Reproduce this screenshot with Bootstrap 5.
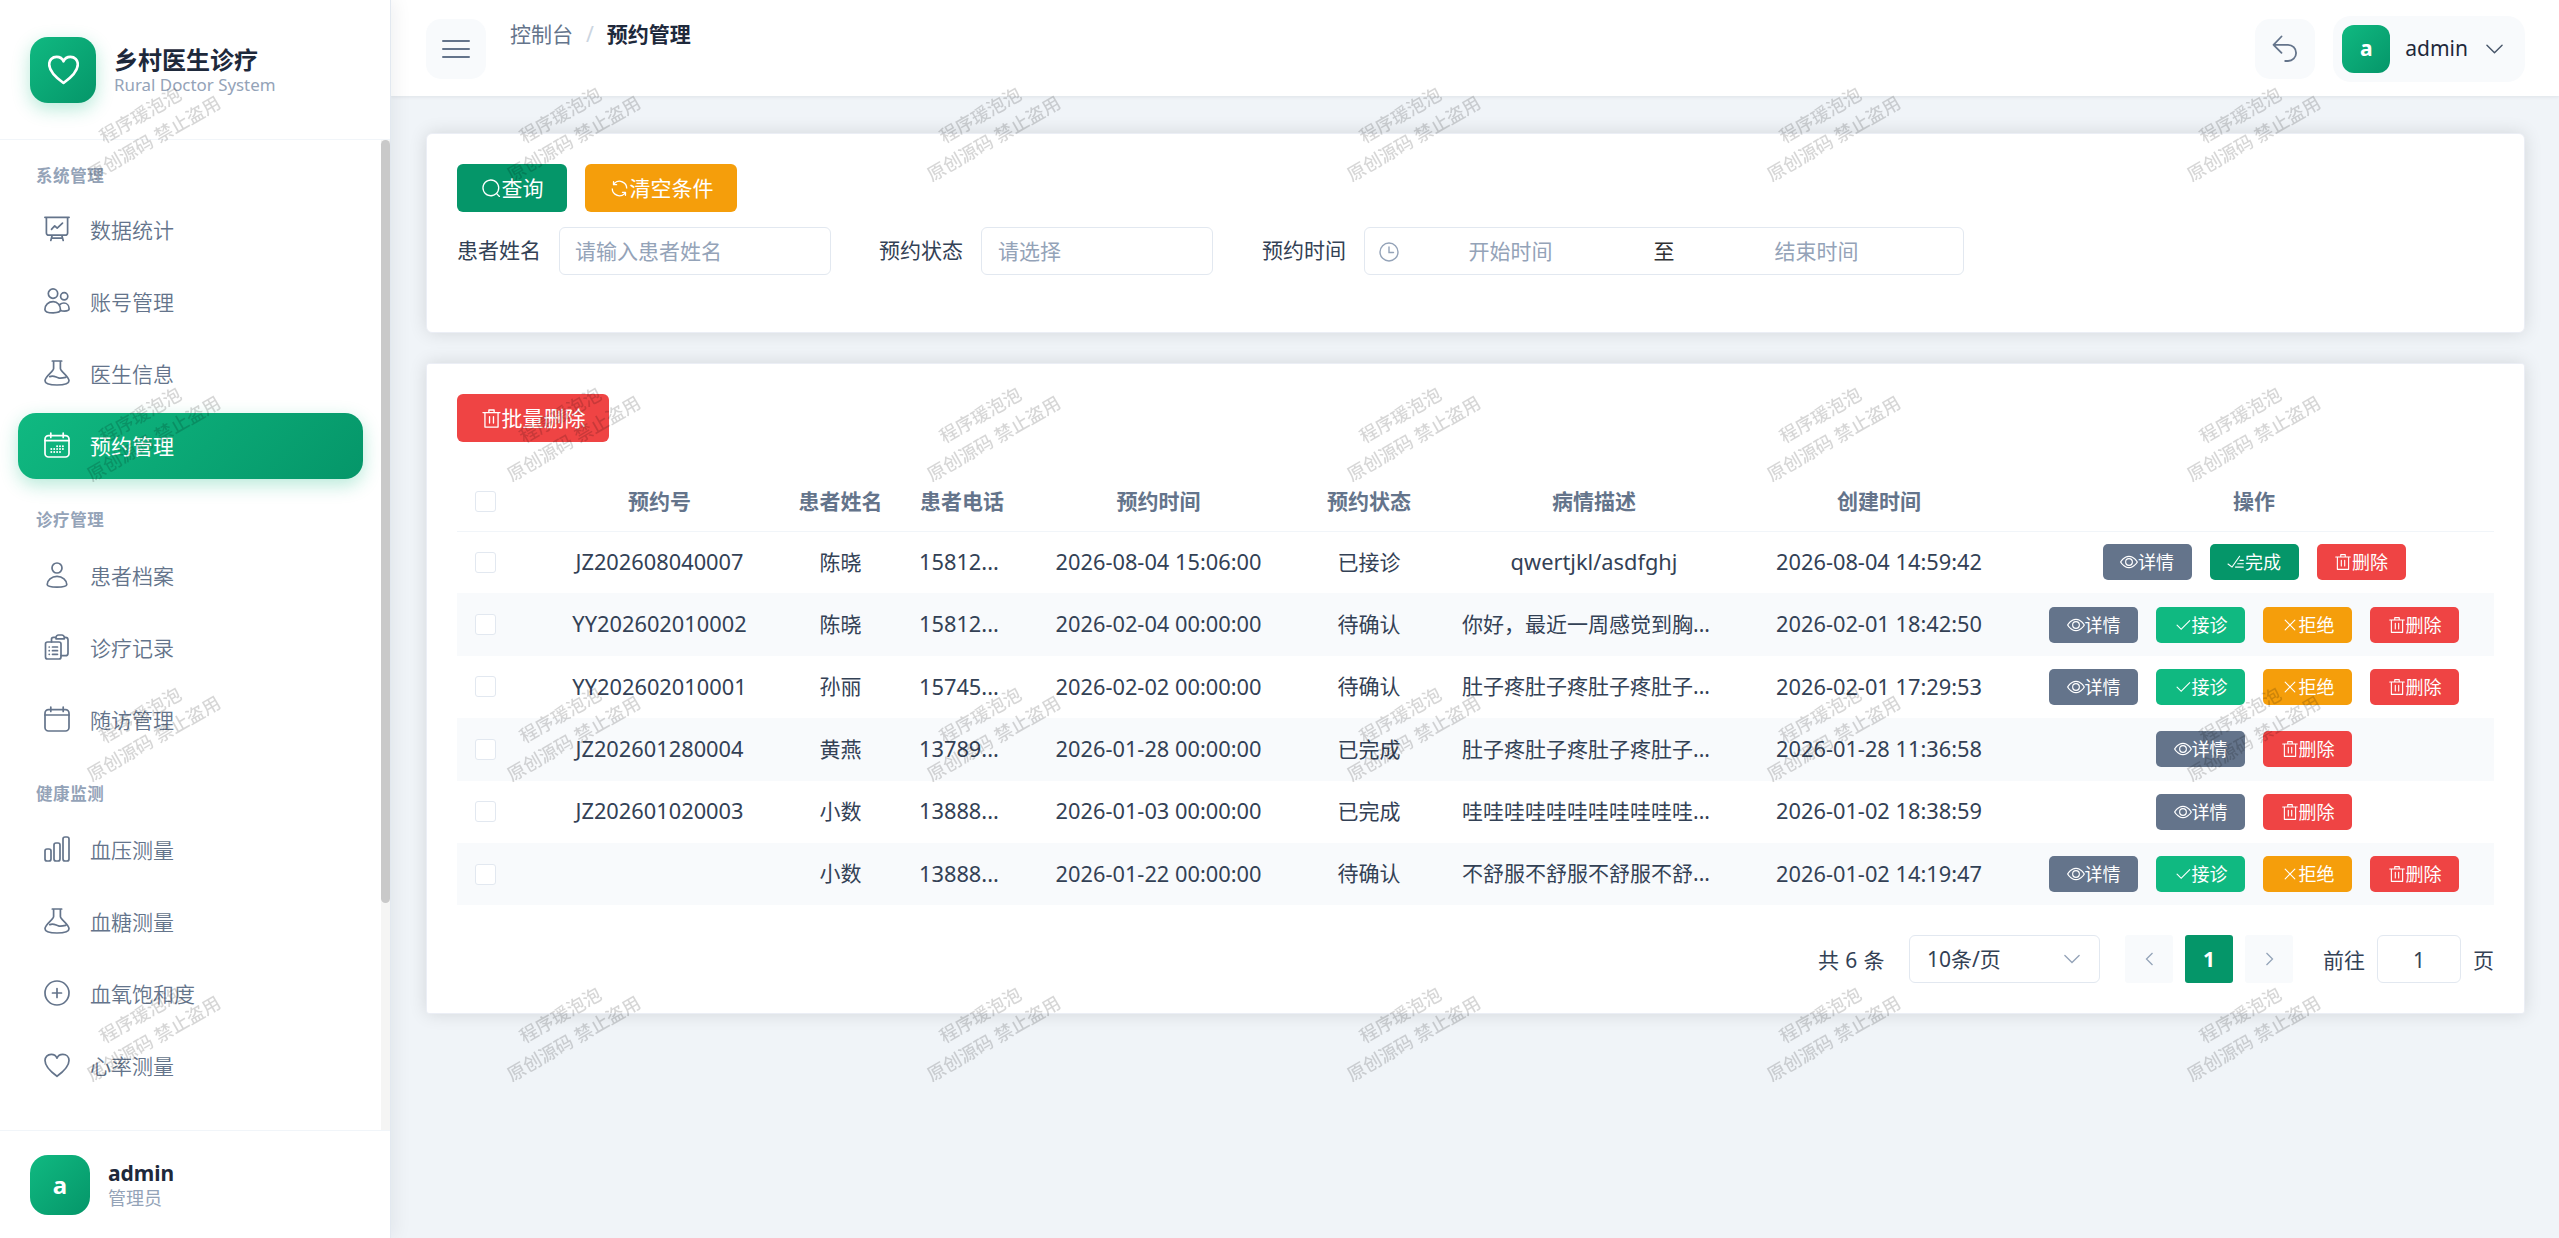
<!DOCTYPE html>
<html lang="zh-CN">
<head>
<meta charset="utf-8">
<meta name="viewport" content="width=device-width, initial-scale=1">
<title>乡村医生诊疗 - 预约管理</title>
<link href="https://cdn.jsdelivr.net/npm/bootstrap@5.3.0/dist/css/bootstrap.min.css" rel="stylesheet">
<style>
:root{--c-green:#059669;--c-mint:#10b981;--c-slate:#64748b;--c-line:#e2e8f0}
html,body{height:100%}
body{font-family:"Noto Sans","Noto Sans CJK SC",sans-serif;font-size:21px;line-height:1.5;color:#334155;background:#f0f4f8;overflow:hidden}
svg{display:block;flex:none}
.stroke-icon{width:26px;height:26px;fill:none;stroke:currentColor;stroke-width:1.7;stroke-linecap:round;stroke-linejoin:round}
.fill-icon{width:1em;height:1em;fill:currentColor}
.grad{background:linear-gradient(135deg,#10b981,#059669);color:#fff}
/* sidebar */
.side{width:391px;flex:none;background:#fff;box-shadow:3px 0 18px rgba(15,23,42,.07);border-right:1px solid var(--c-line);z-index:3}
.brand{height:140px;padding-left:30px;gap:18px;border-bottom:1px solid #f1f5f9}
.brand-logo{width:66px;height:66px;border-radius:18px;box-shadow:0 6px 18px rgba(16,185,129,.3)}
.brand-heart{width:31px;height:31px;stroke-width:2.2}
.brand-title{font-size:24px;line-height:26px;font-weight:700;color:#1e293b;margin-top:4px}
.brand-sub{font-size:16.9px;line-height:24px;color:#94a3b8}
.menu{padding:3px 0 0 0;min-height:0;overflow:hidden}
.menu-list{width:381px;padding:0 18px}
.menu-cap{height:58px;padding:12px 0 0 18px;font-size:16.5px;font-weight:700;letter-spacing:.6px;color:#94a3b8}
.menu-cap:first-child{height:54px}
.menu-item{width:345px;height:66px;margin-bottom:6px;padding:1px 0 0 26px;gap:20px;border-radius:18px;color:var(--c-slate);text-decoration:none;font-weight:350}
.menu-item .stroke-icon{margin-top:-4px}
.menu-item.active{color:#fff;font-weight:400;box-shadow:0 6px 18px rgba(16,185,129,.3)}
.track{width:9px;background:#f5f5f4;margin-top:-3px}
.thumb{width:9px;height:763px;border-radius:5px;background:#c9c9c9}
.side-user{height:108px;padding-left:30px;gap:18px;border-top:1px solid #f1f5f9}
.user-name{line-height:26px;padding-top:1px;color:#1e293b}
.user-role{font-size:18px;line-height:24px;color:#94a3b8}
.ava-lg{width:60px;height:60px;border-radius:18px;font-size:24px;font-weight:700}
/* top bar */
.topbar{height:96px;flex:none;padding:0 34px 0 35px;background:#fff;box-shadow:0 1px 4px rgba(15,23,42,.08);z-index:2}
.sq-btn{width:60px;height:60px;margin-top:2px;border-radius:15px;background:#f8fafc;color:var(--c-slate)}
.crumb{margin-left:24px;height:96px;padding-top:18px;gap:13px;line-height:32px;color:var(--c-slate)}
.crumb b{color:#1e293b}
.user-pill{height:66px;padding:0 22px 0 9px;margin:2px 0 0 18px;border-radius:18px;background:#f8fafc;color:#1e293b}
.ava-sm{width:48px;height:48px;border-radius:12px;font-size:21px;font-weight:700}
/* panels */
.work{padding:37px 34px 0 35px}
.panel{background:#fff;border:1px solid #ebeef5;border-radius:6px;box-shadow:0 0 18px rgba(0,0,0,.12);padding:30px}
.panel-a{height:200px;margin-bottom:30px}
.panel-b{height:651px;border-radius:3px}
.ui-btn{height:48px;border-radius:6px;border:0;color:#fff;font-size:21px;padding:0 23.5px;line-height:1}
.ui-btn .fill-icon{width:21px;height:21px}
.bg-g{background:#059669}.bg-m{background:#10b981}.bg-o{background:#f59e0b}.bg-r{background:#ef4444}.bg-s{background:#64748b}
.box{height:48px;padding-top:2px;border:1.5px solid var(--c-line);border-radius:6px;background:#fff;color:#94a3b8}
.lab{width:84px;margin-right:18px;flex:none;color:#334155}
/* table */
.grid-table{width:2037px;table-layout:fixed;border-collapse:collapse;margin-top:31px;text-align:center}
.grid-table th{height:58px;font-weight:700;color:var(--c-slate);border-bottom:1px solid #f1f5f9;padding:0}
.grid-table td{height:62.4px;padding:0;white-space:nowrap}
.grid-table tbody tr:nth-child(even){background:#f8fafc}
.num{font-size:21.8px}
.tick{width:21px;height:21px;border:1.5px solid var(--c-line);border-radius:3px;background:#fff;margin-left:18px}
.grid-table .ph,.grid-table .desc{text-align:left;padding-left:18px}
.ops{gap:18px}
.op{width:89px;height:36px;border:0;border-radius:5px;color:#fff;font-size:18px;line-height:1;padding:0}
.op .fill-icon{width:18px;height:18px}
/* pager */
.pager{margin-top:30px;height:48px}
.pager > span{padding-top:2px}
.pg{width:48px;height:48px;border-radius:3px;background:#f8fafc;color:#94a3b8;margin-right:12px}
.pg.on{background:#059669;color:#fff;font-weight:700}
/* watermark layer */
.wm{position:fixed;left:-63px;top:-23px;width:2700px;display:grid;grid-template-columns:repeat(6,420px);grid-auto-rows:300px;pointer-events:none;z-index:20}
.wm div{display:flex;align-items:center;justify-content:center}
.wm span{transform:rotate(-30deg);font-size:18.2px;font-weight:500;line-height:27px;text-align:center;color:rgba(0,0,0,.16);white-space:nowrap}
</style>
<script src="https://cdn.jsdelivr.net/npm/bootstrap@5.3.0/dist/js/bootstrap.bundle.min.js"></script>
</head>
<body>
<svg width="0" height="0" class="position-absolute">
<symbol id="i-search" viewBox="0 0 1024 1024"><path d="m795.904 750.72 124.992 124.928a32 32 0 0 1-45.248 45.248L750.656 795.904a416 416 0 1 1 45.248-45.248zM480 832a352 352 0 1 0 0-704 352 352 0 0 0 0 704z"/></symbol>
<symbol id="i-refresh" viewBox="0 0 1024 1024"><path d="M771.776 794.88A384 384 0 0 1 128 512h64a320 320 0 0 0 555.712 216.448H654.72a32 32 0 1 1 0-64h149.056a32 32 0 0 1 32 32v148.928a32 32 0 1 1-64 0v-50.56zM276.288 295.616h92.992a32 32 0 0 1 0 64H220.16a32 32 0 0 1-32-32V178.56a32 32 0 0 1 64 0v50.56A384 384 0 0 1 896.128 512h-64a320 320 0 0 0-555.776-216.384z"/></symbol>
<symbol id="i-del" viewBox="0 0 1024 1024"><path d="M160 256H96a32 32 0 0 1 0-64h256V95.936a32 32 0 0 1 32-32h256a32 32 0 0 1 32 32V192h256a32 32 0 1 1 0 64h-64v672a32 32 0 0 1-32 32H192a32 32 0 0 1-32-32zm448-64v-64H416v64zM224 896h576V256H224zm192-128a32 32 0 0 1-32-32V416a32 32 0 0 1 64 0v320a32 32 0 0 1-32 32m192 0a32 32 0 0 1-32-32V416a32 32 0 0 1 64 0v320a32 32 0 0 1-32 32"/></symbol>
<symbol id="i-view" viewBox="0 0 1024 1024"><path d="M512 160c320 0 512 352 512 352S832 864 512 864 0 512 0 512s192-352 512-352m0 64c-225.28 0-384.128 208.064-436.8 288 52.608 79.872 211.456 288 436.8 288 225.28 0 384.128-208.064 436.8-288-52.608-79.872-211.456-288-436.8-288m0 64a224 224 0 1 1 0 448 224 224 0 0 1 0-448m0 64a160.192 160.192 0 0 0-160 160c0 88.192 71.744 160 160 160s160-71.808 160-160-71.744-160-160-160"/></symbol>
<symbol id="i-check" viewBox="0 0 1024 1024"><path d="M406.656 706.944 195.84 496.256a32 32 0 1 0-45.248 45.248l256 256 512-512a32 32 0 0 0-45.248-45.248L406.592 706.944z"/></symbol>
<symbol id="i-close" viewBox="0 0 1024 1024"><path d="M764.288 214.592 512 466.88 259.712 214.592a31.936 31.936 0 0 0-45.12 45.12L466.752 512 214.528 764.224a31.936 31.936 0 1 0 45.12 45.184L512 557.184l252.288 252.288a31.936 31.936 0 0 0 45.12-45.12L557.12 512.064l252.288-252.352a31.936 31.936 0 1 0-45.12-45.184z"/></symbol>
<symbol id="i-done" viewBox="0 0 1024 1024"><path d="M280.768 753.728 691.456 167.04a32 32 0 1 1 52.416 36.672L314.24 817.472a32 32 0 0 1-45.44 7.296l-230.4-172.8a32 32 0 0 1 38.4-51.2l203.968 152.96zM736 448a32 32 0 1 1 0-64h192a32 32 0 1 1 0 64zM608 640a32 32 0 0 1 0-64h319.936a32 32 0 1 1 0 64zM480 832a32 32 0 1 1 0-64h447.936a32 32 0 1 1 0 64z"/></symbol>
<symbol id="s-board" viewBox="0 0 26 26"><path d="M.9 1.3h24.2M2.4 1.3v15.6a2.3 2.3 0 0 0 2.3 2.3h16.6a2.3 2.3 0 0 0 2.3-2.3V1.300M8.200 19.300 6.800 24.500M17.800 19.300l1.400 5.200M7.500 22.200h11M7.500 13.400l3.200-3.600 2.500 2.400 5.300-5"/></symbol>
<symbol id="s-users" viewBox="0 0 26 26"><circle cx="9" cy="5.600" r="4.700"/><path d="M9.200 13.600c-4.800 0-8.300 3.400-8.300 7.800 0 1.900 3 3.400 8.300 3.400 4.800 0 7.300-1 7.300-3 0-4.600-3-8.200-7.300-8.200z"/><circle cx="20.200" cy="8.300" r="3.600"/><path d="M15.900 16.500c1.100-1 2.500-1.500 4-1.500 3 0 5.200 2.600 5.200 5.800 0 1.500-2 2.300-4.600 2.300-1.600 0-3-.2-4-.7"/></symbol>
<symbol id="s-flask" viewBox="0 0 26 26"><path d="M8.300 1h9.400M9.600 1v7.500c0 3-8.600 7.600-8.600 12.300C1 23.800 5 25 13 25s12-1.200 12-4.200c0-4.700-8.600-9.300-8.600-12.300V1M5.800 16.600c3.800-1.600 6 .7 8.600 1.300 2.200.5 4.200.2 7.200-.5"/></symbol>
<symbol id="s-cal" viewBox="0 0 26 26"><rect x="1" y="3.600" width="24" height="21.400" rx="3.500"/><path d="M6.800 1v4.500M19.200 1v4.500M1 9h24"/></symbol>
<symbol id="s-caldots" viewBox="0 0 26 26"><rect x="1" y="3.600" width="24" height="21.400" rx="3.500"/><path d="M6.800 1v4.500M19.200 1v4.500M1 8.600h24"/><path stroke-dasharray="0 2.900" stroke-width="2" d="M13.100 14.200h7M7.300 17.100h12.800M7.300 20h10"/></symbol>
<symbol id="s-user" viewBox="0 0 26 26"><circle cx="13" cy="6" r="5"/><path d="M13 14.300c-5.500 0-9.800 4-9.800 8.200 0 1.600 3.800 2.600 9.800 2.600s9.800-1 9.800-2.600c0-4.200-4.300-8.200-9.800-8.200z"/></symbol>
<symbol id="s-clip" viewBox="0 0 26 26"><rect x="1.500" y="8" width="15.500" height="17" rx="2"/><path d="M7.500 8V5.300a2 2 0 0 1 2-2H12M20.300 3.300h1.200a2.500 2.500 0 0 1 2.500 2.500v13.400a2.500 2.500 0 0 1-2.500 2.500H17M12 4.800V3.500A2.500 2.500 0 0 1 14.500 1h3.300a2.500 2.500 0 0 1 2.500 2.500v1.300zM5.200 13h.1M8.500 13h5M5.200 16.700h.1M8.500 16.700h5M5.200 20.300h.1M8.500 20.300h5"/></symbol>
<symbol id="s-bars" viewBox="0 0 26 26"><rect x="1" y="13" width="6" height="12" rx="2"/><rect x="10" y="7" width="6" height="18" rx="2"/><rect x="19" y="1" width="6" height="24" rx="2"/></symbol>
<symbol id="s-plus" viewBox="0 0 26 26"><circle cx="13" cy="13" r="12"/><path d="M8.500 13h9M13 8.500v9"/></symbol>
<symbol id="s-heart" viewBox="0 0 26 26"><path d="M13 24.300C7 20 1 15 1 8.600 1 5 3.600 2.400 7.200 2.400c2.600 0 4.900 1.500 5.800 3.800.9-2.300 3.200-3.800 5.800-3.800C22.400 2.400 25 5 25 8.600c0 6.400-6 11.400-12 15.700z"/></symbol>
<symbol id="s-down" viewBox="0 0 18 10"><path d="m1 1 8 8 8-8"/></symbol>
</svg>

<div class="d-flex vh-100">
  <aside class="side d-flex flex-column">
    <div class="brand d-flex align-items-center">
      <div class="brand-logo grad d-flex align-items-center justify-content-center"><svg class="stroke-icon brand-heart"><use href="#s-heart"/></svg></div>
      <div><div class="brand-title">乡村医生诊疗</div><div class="brand-sub">Rural Doctor System</div></div>
    </div>
    <div class="menu d-flex flex-grow-1">
      <nav class="menu-list flex-shrink-0">
        <div class="menu-cap d-flex align-items-center">系统管理</div>
        <a class="menu-item d-flex align-items-center"><svg class="stroke-icon"><use href="#s-board"/></svg>数据统计</a>
        <a class="menu-item d-flex align-items-center"><svg class="stroke-icon"><use href="#s-users"/></svg>账号管理</a>
        <a class="menu-item d-flex align-items-center"><svg class="stroke-icon"><use href="#s-flask"/></svg>医生信息</a>
        <a class="menu-item active grad d-flex align-items-center"><svg class="stroke-icon"><use href="#s-caldots"/></svg>预约管理</a>
        <div class="menu-cap d-flex align-items-center">诊疗管理</div>
        <a class="menu-item d-flex align-items-center"><svg class="stroke-icon"><use href="#s-user"/></svg>患者档案</a>
        <a class="menu-item d-flex align-items-center"><svg class="stroke-icon"><use href="#s-clip"/></svg>诊疗记录</a>
        <a class="menu-item d-flex align-items-center"><svg class="stroke-icon"><use href="#s-cal"/></svg>随访管理</a>
        <div class="menu-cap d-flex align-items-center">健康监测</div>
        <a class="menu-item d-flex align-items-center"><svg class="stroke-icon"><use href="#s-bars"/></svg>血压测量</a>
        <a class="menu-item d-flex align-items-center"><svg class="stroke-icon"><use href="#s-flask"/></svg>血糖测量</a>
        <a class="menu-item d-flex align-items-center"><svg class="stroke-icon"><use href="#s-plus"/></svg>血氧饱和度</a>
        <a class="menu-item d-flex align-items-center"><svg class="stroke-icon"><use href="#s-heart"/></svg>心率测量</a>
      </nav>
      <div class="track"><div class="thumb"></div></div>
    </div>
    <div class="side-user d-flex align-items-center">
      <div class="ava-lg grad d-flex align-items-center justify-content-center">a</div>
      <div><div class="user-name fw-bold">admin</div><div class="user-role">管理员</div></div>
    </div>
  </aside>

  <div class="flex-grow-1 d-flex flex-column">
    <header class="topbar d-flex align-items-center">
      <div class="sq-btn d-flex align-items-center justify-content-center"><svg width="28" height="20" viewBox="0 0 28 20" fill="none" stroke="currentColor" stroke-width="2" stroke-linecap="round"><path d="M1 2h26M1 10h26M1 18h26"/></svg></div>
      <div class="crumb d-flex"><span>控制台</span><span style="color:#cbd5e1">/</span><b>预约管理</b></div>
      <div class="sq-btn ms-auto d-flex align-items-center justify-content-center"><svg width="26" height="28" viewBox="0 0 26 28" fill="none" stroke="currentColor" stroke-width="1.800" stroke-linecap="round" stroke-linejoin="round"><path d="M9.500 1.500 1.500 9.800l8 8M1.500 9.800H16a8 8 0 0 1 0 16.200h-2.800"/></svg></div>
      <div class="user-pill d-flex align-items-center"><div class="ava-sm grad d-flex align-items-center justify-content-center">a</div><span style="margin:0 18px 0 15px">admin</span><svg width="17" height="10" fill="none" stroke="#475569" stroke-width="1.500" stroke-linecap="round" stroke-linejoin="round"><use href="#s-down"/></svg></div>
    </header>

    <main class="work">
      <section class="panel panel-a">
        <div class="d-flex" style="gap:18px">
          <button class="ui-btn bg-g d-flex align-items-center"><svg class="fill-icon"><use href="#i-search"/></svg>查询</button>
          <button class="ui-btn bg-o d-flex align-items-center"><svg class="fill-icon"><use href="#i-refresh"/></svg>清空条件</button>
        </div>
        <div class="d-flex align-items-center" style="margin-top:15px">
          <span class="lab">患者姓名</span><div class="box d-flex align-items-center" style="width:272px;padding-left:15px;margin-right:48px">请输入患者姓名</div>
          <span class="lab">预约状态</span><div class="box d-flex align-items-center" style="width:232px;padding-left:16px;margin-right:49px">请选择</div>
          <span class="lab">预约时间</span>
          <div class="box d-flex align-items-center" style="width:600px;padding-left:14px">
            <svg width="20" height="20" viewBox="0 0 20 20" fill="none" stroke="currentColor" stroke-width="1.400" stroke-linecap="round"><circle cx="10" cy="10" r="9"/><path d="M10 5v5.500h4.500"/></svg>
            <span style="width:225px;margin-left:-1px" class="text-center">开始时间</span><span style="width:82px;color:#303133" class="text-center">至</span><span style="width:223px" class="text-center">结束时间</span>
          </div>
        </div>
      </section>

      <section class="panel panel-b">
        <button class="ui-btn bg-r d-flex align-items-center"><svg class="fill-icon"><use href="#i-del"/></svg>批量删除</button>
        <table class="grid-table">
          <colgroup><col style="width:82px"><col style="width:241px"><col style="width:121px"><col style="width:122px"><col style="width:271px"><col style="width:150px"><col style="width:300px"><col style="width:270px"><col style="width:480px"></colgroup>
          <thead><tr><th><div class="tick"></div></th><th>预约号</th><th>患者姓名</th><th>患者电话</th><th>预约时间</th><th>预约状态</th><th>病情描述</th><th>创建时间</th><th>操作</th></tr></thead>
          <tbody>
            <tr><td><div class="tick"></div></td><td class="num">JZ202608040007</td><td>陈晓</td><td class="num ph">15812...</td><td class="num">2026-08-04 15:06:00</td><td>已接诊</td><td class="num">qwertjkl/asdfghj</td><td class="num">2026-08-04 14:59:42</td><td><div class="ops d-flex justify-content-center"><button class="op bg-s d-flex align-items-center justify-content-center"><svg class="fill-icon"><use href="#i-view"/></svg>详情</button><button class="op bg-g d-flex align-items-center justify-content-center"><svg class="fill-icon"><use href="#i-done"/></svg>完成</button><button class="op bg-r d-flex align-items-center justify-content-center"><svg class="fill-icon"><use href="#i-del"/></svg>删除</button></div></td></tr>
            <tr><td><div class="tick"></div></td><td class="num">YY202602010002</td><td>陈晓</td><td class="num ph">15812...</td><td class="num">2026-02-04 00:00:00</td><td>待确认</td><td class="desc">你好，最近一周感觉到胸...</td><td class="num">2026-02-01 18:42:50</td><td><div class="ops d-flex justify-content-center"><button class="op bg-s d-flex align-items-center justify-content-center"><svg class="fill-icon"><use href="#i-view"/></svg>详情</button><button class="op bg-m d-flex align-items-center justify-content-center"><svg class="fill-icon"><use href="#i-check"/></svg>接诊</button><button class="op bg-o d-flex align-items-center justify-content-center"><svg class="fill-icon"><use href="#i-close"/></svg>拒绝</button><button class="op bg-r d-flex align-items-center justify-content-center"><svg class="fill-icon"><use href="#i-del"/></svg>删除</button></div></td></tr>
            <tr><td><div class="tick"></div></td><td class="num">YY202602010001</td><td>孙丽</td><td class="num ph">15745...</td><td class="num">2026-02-02 00:00:00</td><td>待确认</td><td class="desc">肚子疼肚子疼肚子疼肚子...</td><td class="num">2026-02-01 17:29:53</td><td><div class="ops d-flex justify-content-center"><button class="op bg-s d-flex align-items-center justify-content-center"><svg class="fill-icon"><use href="#i-view"/></svg>详情</button><button class="op bg-m d-flex align-items-center justify-content-center"><svg class="fill-icon"><use href="#i-check"/></svg>接诊</button><button class="op bg-o d-flex align-items-center justify-content-center"><svg class="fill-icon"><use href="#i-close"/></svg>拒绝</button><button class="op bg-r d-flex align-items-center justify-content-center"><svg class="fill-icon"><use href="#i-del"/></svg>删除</button></div></td></tr>
            <tr><td><div class="tick"></div></td><td class="num">JZ202601280004</td><td>黄燕</td><td class="num ph">13789...</td><td class="num">2026-01-28 00:00:00</td><td>已完成</td><td class="desc">肚子疼肚子疼肚子疼肚子...</td><td class="num">2026-01-28 11:36:58</td><td><div class="ops d-flex justify-content-center"><button class="op bg-s d-flex align-items-center justify-content-center"><svg class="fill-icon"><use href="#i-view"/></svg>详情</button><button class="op bg-r d-flex align-items-center justify-content-center"><svg class="fill-icon"><use href="#i-del"/></svg>删除</button></div></td></tr>
            <tr><td><div class="tick"></div></td><td class="num">JZ202601020003</td><td>小数</td><td class="num ph">13888...</td><td class="num">2026-01-03 00:00:00</td><td>已完成</td><td class="desc">哇哇哇哇哇哇哇哇哇哇哇...</td><td class="num">2026-01-02 18:38:59</td><td><div class="ops d-flex justify-content-center"><button class="op bg-s d-flex align-items-center justify-content-center"><svg class="fill-icon"><use href="#i-view"/></svg>详情</button><button class="op bg-r d-flex align-items-center justify-content-center"><svg class="fill-icon"><use href="#i-del"/></svg>删除</button></div></td></tr>
            <tr><td><div class="tick"></div></td><td></td><td>小数</td><td class="num ph">13888...</td><td class="num">2026-01-22 00:00:00</td><td>待确认</td><td class="desc">不舒服不舒服不舒服不舒...</td><td class="num">2026-01-02 14:19:47</td><td><div class="ops d-flex justify-content-center"><button class="op bg-s d-flex align-items-center justify-content-center"><svg class="fill-icon"><use href="#i-view"/></svg>详情</button><button class="op bg-m d-flex align-items-center justify-content-center"><svg class="fill-icon"><use href="#i-check"/></svg>接诊</button><button class="op bg-o d-flex align-items-center justify-content-center"><svg class="fill-icon"><use href="#i-close"/></svg>拒绝</button><button class="op bg-r d-flex align-items-center justify-content-center"><svg class="fill-icon"><use href="#i-del"/></svg>删除</button></div></td></tr>
          </tbody>
        </table>
        <div class="pager d-flex align-items-center justify-content-end">
          <span style="margin-right:24px;letter-spacing:.4px">共 6 条</span>
          <div class="box d-flex align-items-center justify-content-between" style="width:191px;padding:0 19px 0 17px;margin-right:25px"><span style="color:#334155">10条/页</span><svg width="16" height="10" fill="none" stroke="currentColor" stroke-width="1.500" stroke-linecap="round"><use href="#s-down"/></svg></div>
          <div class="pg d-flex align-items-center justify-content-center"><svg width="9" height="14" viewBox="0 0 9 14" fill="none" stroke="currentColor" stroke-width="1.300"><path d="M7.500 1 1.500 7l6 6"/></svg></div>
          <div class="pg on d-flex align-items-center justify-content-center">1</div>
          <div class="pg d-flex align-items-center justify-content-center"><svg width="9" height="14" viewBox="0 0 9 14" fill="none" stroke="currentColor" stroke-width="1.300"><path d="m1.500 1 6 6-6 6"/></svg></div>
          <span style="margin:0 12px 0 18px">前往</span>
          <div class="box d-flex align-items-center justify-content-center" style="width:84px;margin-right:12px;color:#334155">1</div>
          <span>页</span>
        </div>
      </section>
    </main>
  </div>
</div>

<div class="wm" aria-hidden="true"></div>
<script>
// Tile the copyright notice over the whole window
document.querySelector('.wm').innerHTML = '<div><span>程序瑗泡泡<br>原创源码 禁止盗用</span></div>'.repeat(24);
</script>
</body>
</html>
